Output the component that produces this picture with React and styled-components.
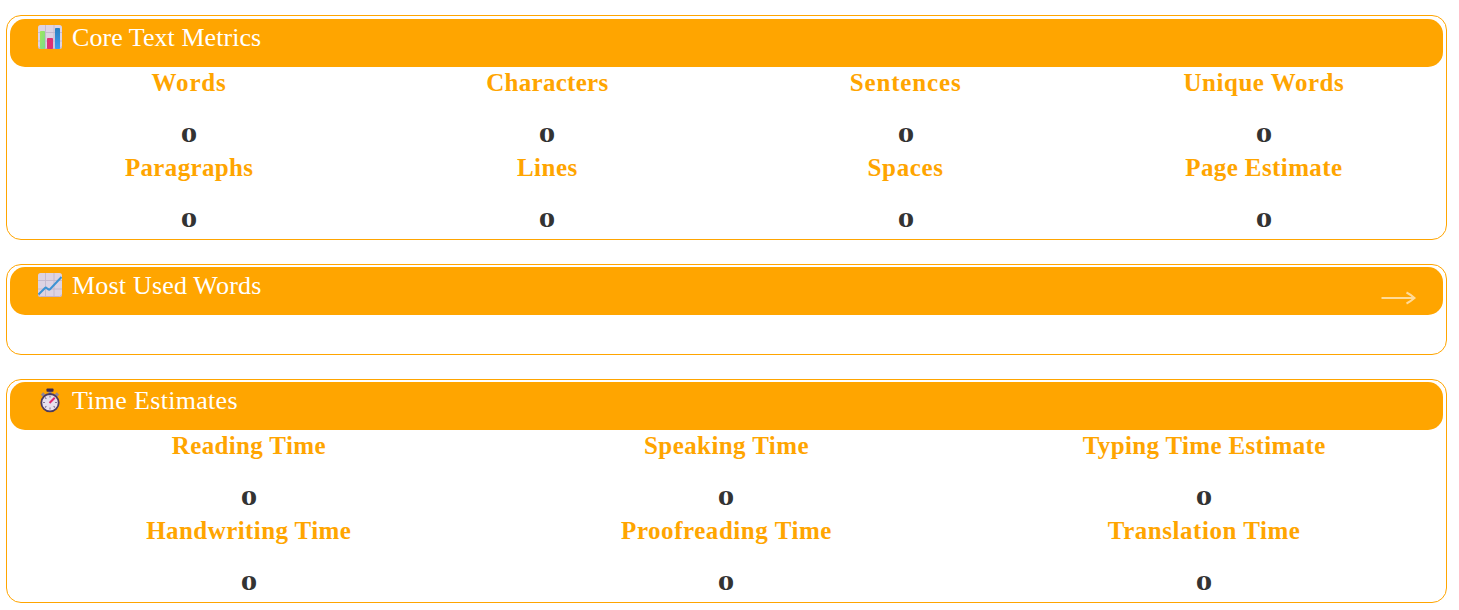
import React from 'react'
import styled, { createGlobalStyle } from 'styled-components'

const GlobalStyle = createGlobalStyle`
    * {
        box-sizing: border-box;
    }
    body {
        margin: 0;
        background: #fff;
        font-family: "Liberation Serif", serif;
    }
`

const Page = styled.div`
    display: flex;
    flex-direction: column;
    gap: 24px;
    width: 1459px;
    padding: 15px 12px 0 6px;
`

const Card = styled.section`
    border: 1px solid orange;
    border-radius: 15px;
    padding: ${(props) => props.$top || 2}px 3px 2px;
    height: ${(props) => props.$height}px;
`

const CardHeader = styled.header`
    display: flex;
    justify-content: space-between;
    height: 48px;
    padding: 6px 27px 0;
    border-radius: 15px;
    background: orange;
    color: #fff;
`

const Title = styled.h2`
    display: flex;
    gap: 10px;
    margin: 0;
    font-size: 26px;
    font-weight: 400;
    line-height: 25px;
    letter-spacing: ${(props) => props.$track}px;
    white-space: nowrap;
`

const Icon = styled.svg`
    width: 25px;
    height: 25px;
    flex: none;
`

const Arrow = styled.svg`
    width: 36px;
    height: 14px;
    margin-top: 18px;
    fill: none;
    stroke: #ffdb99;
    stroke-width: 2;
`

const Grid = styled.div`
    display: grid;
    grid-template-columns: repeat(${(props) => props.$columns}, 1fr);
`

const Metric = styled.div`
    display: flex;
    flex-direction: column;
    align-items: center;
    height: ${(props) => props.$height}px;
    font-weight: 700;
`

const Label = styled.div`
    padding-top: 3px;
    font-size: 25px;
    line-height: 26px;
    color: orange;
    letter-spacing: ${(props) => props.$track}px;
    white-space: nowrap;
`

const Value = styled.div`
    margin-top: 28px;
    font-size: 20px;
    line-height: 22px;
    color: #333;
    transform: scaleX(1.65);
`

const coreMetrics = [
    { label: 'Words', track: 0.85 },
    { label: 'Characters', track: 0.28 },
    { label: 'Sentences', track: 0.85 },
    { label: 'Unique Words', track: 0.53 },
    { label: 'Paragraphs', track: 0.35 },
    { label: 'Lines', track: 0.53 },
    { label: 'Spaces', track: 0.68 },
    { label: 'Page Estimate', track: 0.4 },
]

const timeMetrics = [
    { label: 'Reading Time', track: 0.36 },
    { label: 'Speaking Time', track: 0.41 },
    { label: 'Typing Time Estimate', track: 0.34 },
    { label: 'Handwriting Time', track: 0.42 },
    { label: 'Proofreading Time', track: 0.54 },
    { label: 'Translation Time', track: 0.54 },
]

const GridPaper = () => (
    <>
        <rect x="1" y="0" width="24" height="24" rx="2.5" fill="#ddd3e3" />
        <path d="M1 7.5h24M1 16h24M8.5 0v24M17 0v24" stroke="#c2b7cc" strokeWidth="0.9" />
        <path d="M1.5 21.5q0 2 2 2h19q2 0 2-2" fill="none" stroke="#c3b2cd" />
    </>
)

const BarChartIcon = () => (
    <Icon viewBox="0 0 25 25">
        <defs>
            <linearGradient id="green" x1="0" y1="0" x2="1" y2="1">
                <stop offset="0" stopColor="#a0e85c" />
                <stop offset="1" stopColor="#79d98c" />
            </linearGradient>
            <linearGradient id="blue" x1="0" y1="0" x2="0" y2="1">
                <stop offset="0" stopColor="#2b7fc0" />
                <stop offset="1" stopColor="#3c9cf0" />
            </linearGradient>
        </defs>
        <GridPaper />
        <rect x="3" y="6" width="5" height="18" rx="0.8" fill="url(#green)" />
        <rect x="10" y="13" width="6" height="11" rx="0.8" fill="#dc3173" />
        <rect x="18" y="3" width="5" height="21" rx="0.8" fill="url(#blue)" />
    </Icon>
)

const LineChartIcon = () => (
    <Icon viewBox="0 0 25 25">
        <GridPaper />
        <path d="M1.5 21.5L8 15q.8-.8 1.6 0l1.8 1.4q.8.5 1.6-.2L24.5 4" fill="none" stroke="#3c93d4" strokeWidth="2" />
    </Icon>
)

const StopwatchIcon = () => (
    <Icon viewBox="0 0 25 25">
        <path d="M5 5.5l2.5 2.5M21 5.5l-2.5 2.5" stroke="#8f8494" strokeWidth="3.2" />
        <rect x="11.5" y="3" width="3" height="3" fill="#8f8494" />
        <rect x="9.5" y="0.5" width="7" height="3.2" rx="0.8" fill="#3b2850" />
        <circle cx="13" cy="14.7" r="8.7" fill="#e8e0ee" stroke="#4b3a60" strokeWidth="1.8" />
        <path d="M13 7.5v2M13 19.5v2M6 14.5h2M18 14.5h2M8 9.5l1.4 1.4M8 19.5l1.4-1.4M18 19.5l-1.4-1.4" stroke="#887c96" strokeWidth="1.1" />
        <path d="M12.5 15l5.2-5.2" stroke="#e0296d" strokeWidth="2" />
    </Icon>
)

const MetricGrid = ({ items, columns, rowHeight }) => (
    <Grid $columns={columns}>
        {items.map((item) => (
            <Metric key={item.label} $height={rowHeight}>
                <Label $track={item.track}>{item.label}</Label>
                <Value>0</Value>
            </Metric>
        ))}
    </Grid>
)

const App = () => {
    return (
        <>
            <GlobalStyle />
            <Page>
                <Card $height={225} $top={3}>
                    <CardHeader>
                        <Title $track={0.05}><BarChartIcon />Core Text Metrics</Title>
                    </CardHeader>
                    <MetricGrid items={coreMetrics} columns={4} rowHeight={85} />
                </Card>

                <Card $height={91}>
                    <CardHeader>
                        <Title $track={0.19}><LineChartIcon />Most Used Words</Title>
                        <Arrow viewBox="0 0 36 14">
                            <path d="M1.5 7H34.5M26.5 1.5Q30.5 3.5 34.5 7Q30.5 10.5 26.5 12.5" />
                        </Arrow>
                    </CardHeader>
                </Card>

                <Card $height={224}>
                    <CardHeader>
                        <Title $track={0.31}><StopwatchIcon />Time Estimates</Title>
                    </CardHeader>
                    <MetricGrid items={timeMetrics} columns={3} rowHeight={84.5} />
                </Card>
            </Page>
        </>
    )
}

export default App
